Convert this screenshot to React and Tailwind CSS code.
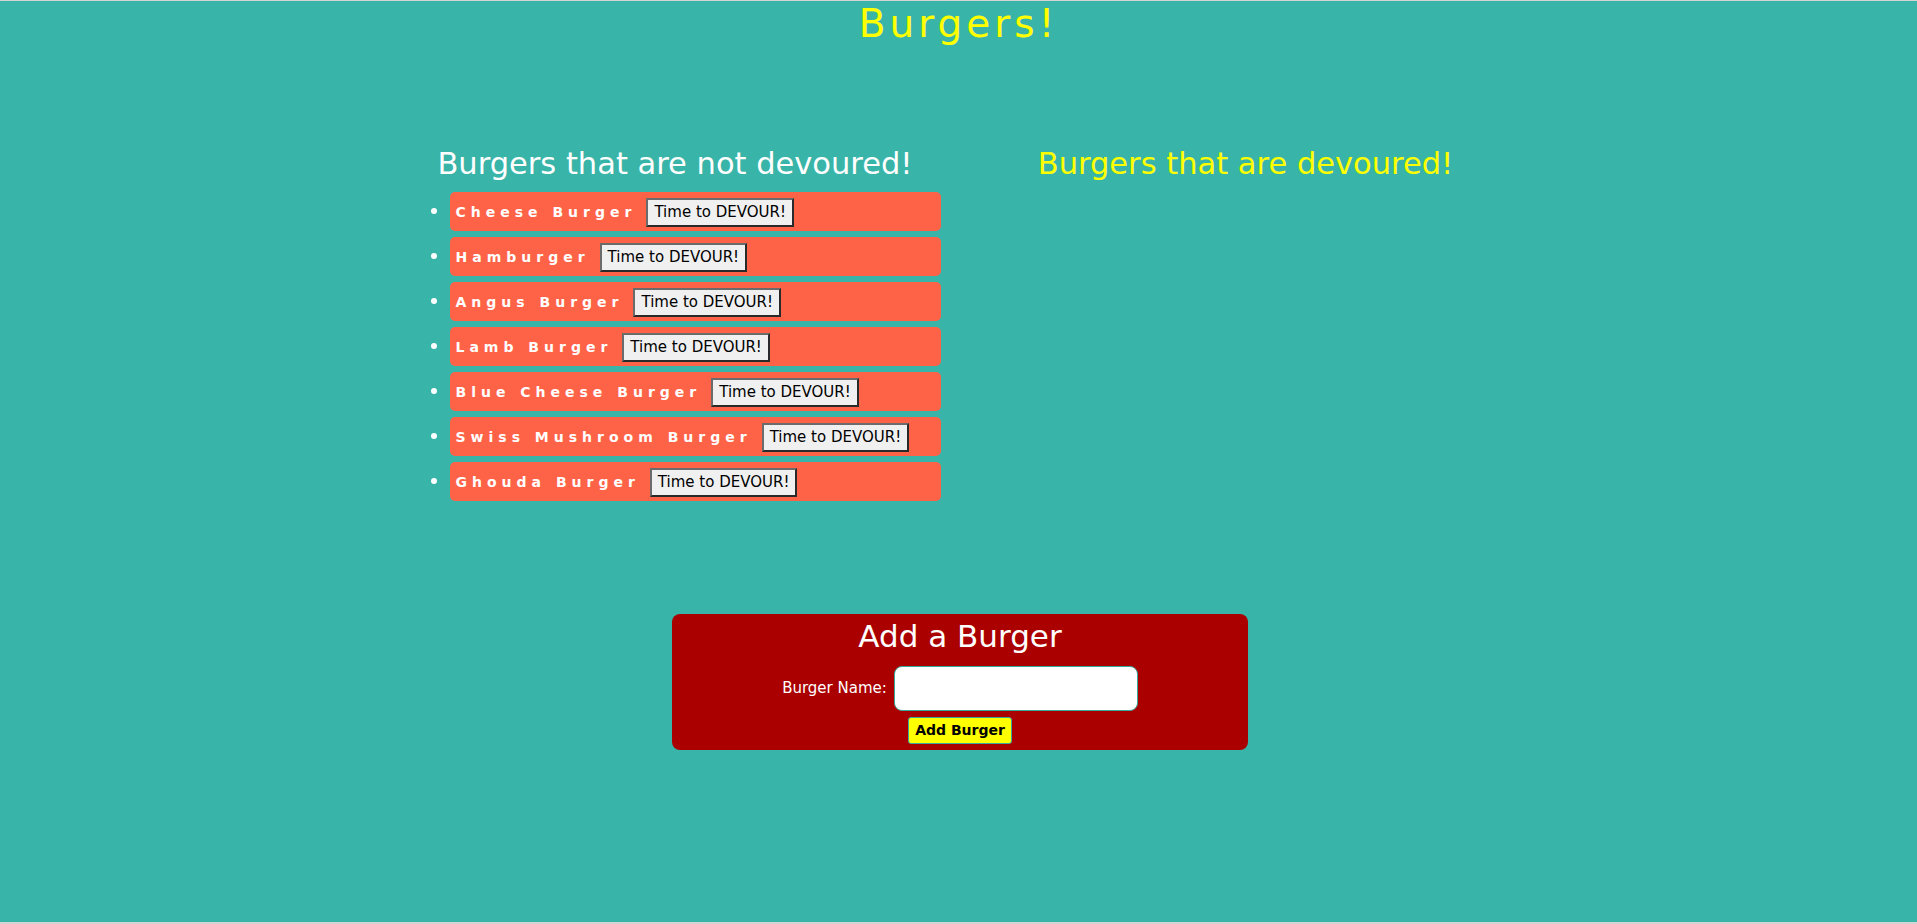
import React from "react";

const burgers = [
  "Cheese Burger",
  "Hamburger",
  "Angus Burger",
  "Lamb Burger",
  "Blue Cheese Burger",
  "Swiss Mushroom Burger",
  "Ghouda Burger",
];

const font = { fontFamily: "'DejaVu Sans', Verdana, sans-serif" };

export default function App() {
  return (
    <div
      style={font}
      className="h-[924px] bg-[#38b4a8] border-t border-b-2 border-[#d4d4d4] overflow-hidden"
    >
      {/* TITLE */}
      <h1 className="text-center text-[39px] leading-[46px] tracking-[4px] text-[#ffff00]">
        Burgers!
      </h1>

      {/* COLUMNS */}
      <div className="flex justify-center mt-[97px]">
        <div className="w-[574px]">
          <h2 className="text-center pl-[7px] text-[30.5px] leading-[40px] text-white">
            Burgers that are not devoured!
          </h2>
          <ul className="list-disc ml-[25px] w-[531px] pl-10 mt-[8px]">
            {burgers.map((b) => (
              <li
                key={b}
                className="h-[39px] mb-[6px] rounded-[5px] bg-[#ff6347] text-white text-[20px] marker:text-white"
              >
                <div className="flex items-center h-full pt-[2px] px-[6px]">
                  <span className="text-[14px] font-bold tracking-[5px] mr-[10px]">{b}</span>
                  <button className="h-[29px] px-[6px] bg-[#f0f0f0] text-black text-[15px] leading-none border-2 border-t-[#6b6b6b] border-l-[#6b6b6b] border-r-[#2a2a2a] border-b-[#2a2a2a]">
                    Time to DEVOUR!
                  </button>
                </div>
              </li>
            ))}
          </ul>
        </div>
        <div className="w-[574px]">
          <h2 className="text-center text-[30.5px] leading-[40px] text-[#ffff00]">
            Burgers that are devoured!
          </h2>
        </div>
      </div>

      {/* ADD FORM */}
      <div className="flex justify-center pl-[3px] mt-[107px]">
        <div className="w-[576px] rounded-[8px] bg-[#aa0000] pt-[4px] pb-[6px] flex flex-col items-center">
          <h3 className="text-[31px] leading-[36px] text-white">Add a Burger</h3>
          <div className="flex items-center mt-[12px]">
            <label className="text-[15px] text-white mr-[7px]">Burger Name:</label>
            <input
              type="text"
              className="w-[244px] h-[45px] rounded-[8px] bg-white border border-[#3aa79c] outline-none px-2"
            />
          </div>
          <button className="mt-[6px] h-[27px] px-[6px] rounded-[3px] bg-[#ffff00] border border-[#3aa79c] text-[14px] font-bold text-black">
            Add Burger
          </button>
        </div>
      </div>
    </div>
  );
}
